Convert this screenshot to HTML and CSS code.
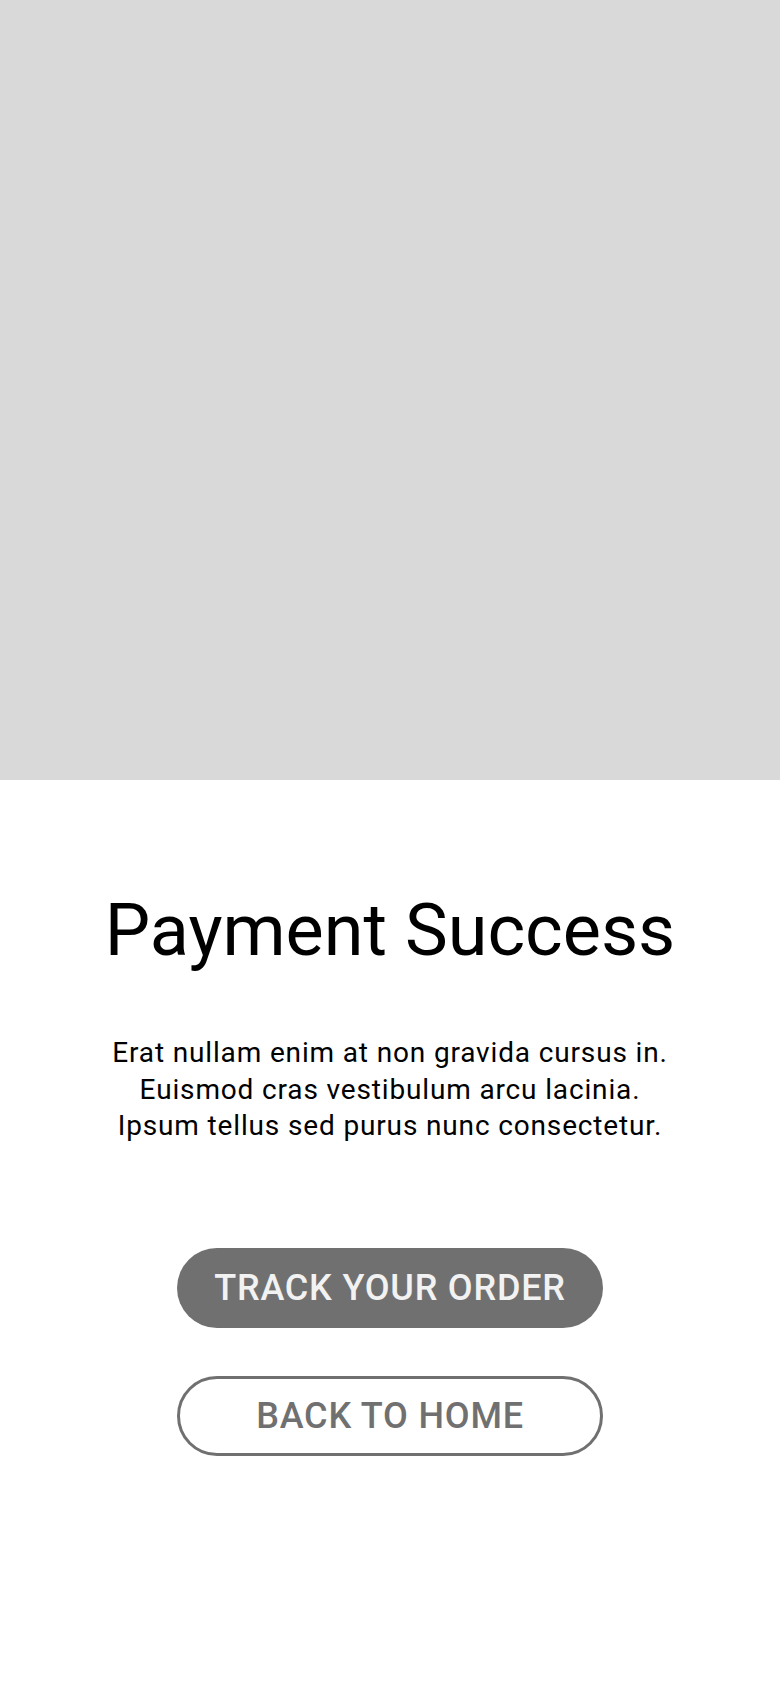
FILE: index.html
```html
<!DOCTYPE html>
<html lang="en">
<head>
<meta charset="utf-8">
<title>Payment Success</title>
<link rel="stylesheet" href="styles.css">
</head>
<body>
<div class="screen">
  <div class="hero"></div>
  <div class="content">
    <h1 class="title">Payment Success</h1>
    <p class="text">Erat nullam enim at non gravida cursus in.<br>Euismod cras vestibulum arcu lacinia.<br>Ipsum tellus sed purus nunc consectetur.</p>
    <div class="actions">
      <button class="btn btn-solid">TRACK YOUR ORDER</button>
      <button class="btn btn-outline">BACK TO HOME</button>
    </div>
  </div>
</div>
</body>
</html>
```

FILE: styles.css
```css
* { box-sizing: border-box; }
html, body { margin: 0; padding: 0; background: #ffffff; }
body { font-family: Roboto, "Liberation Sans", sans-serif; }
.screen { width: 780px; height: 1688px; display: flex; flex-direction: column; }
.hero { height: 780px; background: #d9d9d9; flex-shrink: 0; }
.content { display: flex; flex-direction: column; align-items: center; }
.title { margin: 109px 0 0; font-size: 72px; line-height: 84px; font-weight: 400; color: #000; }
.text { margin: 62px 0 0; font-size: 28px; line-height: 36.5px; text-align: center; color: #000; letter-spacing: 0.85px; }
.actions { margin-top: 103px; display: flex; flex-direction: column; gap: 48px; }
.btn { width: 426px; height: 80px; border-radius: 40px; font-family: Roboto, "Liberation Sans", sans-serif; font-size: 36px; font-weight: 500; letter-spacing: 0.8px; display: flex; align-items: center; justify-content: center; padding: 0; }
.btn-solid { background: #707070; color: #f2f2f2; border: none; }
.btn-outline { background: #ffffff; color: #707070; border: 3px solid #707070; }
```
